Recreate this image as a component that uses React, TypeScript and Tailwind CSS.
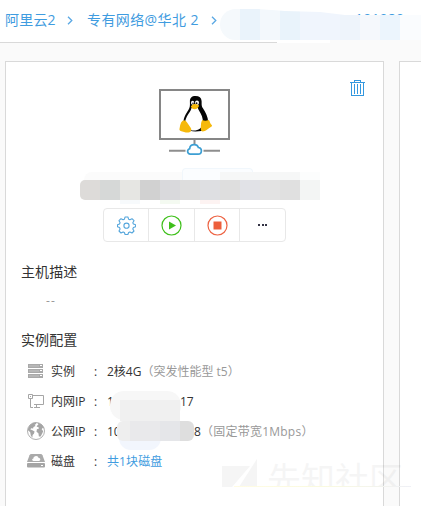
import type { ReactNode } from "react";

const nameBlocks = [
  "bg-[#dddbd9] rounded-l-[5px]",
  "bg-[#d6d8d7]",
  "bg-[#e6e6e3]",
  "bg-[#d1d1d1]",
  "bg-[#d9d9dc]",
  "bg-[#dddddd]",
  "bg-[#dedfe2]",
  "bg-[#dedede]",
  "bg-[#e1e2e7]",
  "bg-[#e3e3e3]",
  "bg-[#e0e0e0]",
  "bg-[#f3f5f4]",
];

function Chevron({ className }: { className: string }) {
  return (
    <svg className={`h-[9px] w-[6px] shrink-0 ${className}`} viewBox="0 0 6 9" fill="none" stroke="#5aa8e4" strokeWidth="1.3">
      <path d="M1 .7 4.8 4.5 1 8.3" />
    </svg>
  );
}

function HostPicture() {
  return (
    <svg className="h-[68px] w-[72px]" viewBox="0 0 72 68" fill="none">
      <rect x="1" y="2" width="69" height="49" fill="#fff" stroke="#868686" strokeWidth="2" />
      <path d="M35.500 52v4M10 62.700h16.500M44.500 62.700h16.500" stroke="#8e8e8e" strokeWidth="2" />
      <path d="M31.300 66.200a2.800 2.800 0 0 1-.6-5.500c.1-2.600 2-4 4.500-4 2.100 0 3.600 1 4.200 2.800 1.900.1 3 1.500 3 3.300 0 2-1.400 3.400-3.300 3.400z" fill="#fff" stroke="#3d9fd3" strokeWidth="1.700" />
      <path d="M36.500 8c-3.800 0-5.700 2-5.600 5.800.1 3.500.2 5.600-1.500 8.300-2.200 3.500-4.700 6.900-4.900 12.200-.3 5 3.600 9.200 12.100 9.200 8.600 0 12.800-2.700 12.600-9.500-.2-5.200-2.600-9.900-5.100-13.600-1.900-2.700-1.300-4-1.500-7.500C42.400 9.800 40.300 8 36.500 8z" fill="#050505" />
      <path d="M32.500 20c-.4 3-2.800 4.900-4.500 8.300-1.700 3.300-2.400 6.100-1.700 9.100 1.500 4 6.200 5.700 10.200 5 4.600-.8 7.200-3.200 7.400-7.800.2-4.700-1.500-8.300-3.500-11.400-.8-1.100-1.300-2.100-1.500-3.200z" fill="#fff" />
      <ellipse cx="33.600" cy="14.800" rx="1.600" ry="2" fill="#fff" />
      <ellipse cx="38" cy="14.700" rx="2" ry="2.200" fill="#fff" />
      <circle cx="34" cy="15.200" r=".8" fill="#111" />
      <circle cx="37.600" cy="15.200" r=".9" fill="#111" />
      <path d="M31.900 18.200c1.400-1.600 2.700-2.200 4.100-2.200 1.600 0 2.800.8 4.100 1.500-.4 2.100-2.500 3.700-4.500 3.700-1.900 0-3.400-1.200-3.700-3z" fill="#f6b90b" />
      <path d="M23.400 33c1.700-1.400 3.300-.5 4.500 1.300l3.600 5.200c1.700 2.400.6 4.800-2 5-2.900.3-5.300-1.100-7.900-1.600-1.700-.4-1.100-2-.8-3.600.4-2.100.8-4.900 2.600-6.300zM43.300 32c2.100 1 4 .9 6.300 0 1.600.9.9 2.900 2.400 4.200 1.200.9 1.500 1.800.2 2.600-2.700 1.600-4.500 3.600-7.200 4.500-2.500.7-3.500-1-3.200-3.600.2-3 0-5.600 1.500-7.700z" fill="#f6b90b" />
    </svg>
  );
}

function TrashIcon() {
  return (
    <svg className="h-[16px] w-[15px]" viewBox="0 0 15 16" fill="none" stroke="#3498df" shapeRendering="crispEdges">
      <path d="M0 2.500h15M4.500 2V.5h6V2M1.500 3v12.500h12V3M4.500 4v10M7.500 4v10M10.500 4v10" />
    </svg>
  );
}

function GearIcon() {
  return (
    <svg className="size-[19px]" viewBox="0 0 19 19" fill="none" stroke="#55a6dc" strokeWidth="1.100">
      <path d="M8.100 1h2.800l.7 2.200 1.300.6 2.100-1.100 2 2-1.200 2.100.6 1.300 2.200.7v2l-2.200.8-.6 1.300 1.200 2.100-2 2-2.100-1.100-1.300.6-.7 2H8.100l-.7-2-1.300-.6L4 17l-2-2 1.100-2.100-.6-1.300L.5 10.800v-2l2-.7.6-1.300L2 4.700l2-2 2.100 1.100 1.300-.6z" strokeLinejoin="round" />
      <circle cx="9.500" cy="9.700" r="2.600" />
    </svg>
  );
}

function ServerIcon() {
  return (
    <svg className="h-[15px] w-[18px]" viewBox="0 0 18 15">
      <path d="M1 0h15v4H1zM1 5h15v4H1zM1 10h15v4H1z" fill="#a9a9a9" />
      <path d="M2 2h10M2 7h10M2 12h10" stroke="#c4c4c4" />
      <path d="M13 1.500h2M13 6.500h2M13 11.500h2" stroke="#fff" />
    </svg>
  );
}

function LanIcon() {
  return (
    <svg className="h-[15px] w-[18px]" viewBox="0 0 18 15" fill="none" stroke="#a5a5a5">
      <path d="M5 1.500h11.500v9H7M3.500 5v8.500H6M9.500 11v2.500M7 13.500h6" />
      <path d="M1.500.5h4v4h-4z" fill="#fff" />
      <path d="M3 2.500h1" />
    </svg>
  );
}

function GlobeIcon() {
  return (
    <svg className="size-[18px]" viewBox="0 0 18 18">
      <circle cx="9" cy="9" r="8.500" fill="#fff" stroke="#b0b0b0" />
      <path d="M1 7C2 3.500 5 .8 8.500.6l1 1.200-1.800 1 .8 1.200-2 1.100-.4 1.400-2-.3-.7 1.300 1.600.5 2.600 1.600-.7 2.100-1.300 1.300-.2 2.700-1.600-2.300-.6-3.100L1 8.300zM10.500.8c3.400.6 6 3 6.900 6l-1.600-1-1.100 1.400 1.500 2-1.100 2.600-1.500 2.600-1.700.1-.5-3.300-1.900-1.400.4-2.600 2.100-.8-.7-1.400-1.700-.3.8-1.400 1-.5z" fill="#a5a5a5" />
    </svg>
  );
}

function DiskIcon() {
  return (
    <svg className="h-[14px] w-[18px]" viewBox="0 0 18 14">
      <path d="M4.500 0h9q1.500 0 2 1.200L18 8H0l2.500-6.800Q3 0 4.500 0z" fill="#aaa" />
      <path d="M6.500 6.900c-1.800 0-1.800-2.400-.1-2.500.1-1.400 1.300-2.300 2.700-2.300s2.200.8 2.500 1.900c2.100-.1 2.300 2.700.4 2.900z" fill="#fff" />
      <rect y="9" width="18" height="4.500" rx="1" fill="#a5a5a5" />
      <path d="M14 11.500h2" stroke="#fff" />
    </svg>
  );
}

function ConfigRow({ icon, label, children }: { icon: ReactNode; label: string; children: ReactNode }) {
  return (
    <div className="flex h-[30px] items-center">
      <span className="flex w-6 shrink-0 items-center">{icon}</span>
      <span className="w-[41px] shrink-0 pt-[2px]">{label}</span>
      <span className="w-[15px] shrink-0 pt-[2px] pl-[2px]">:</span>
      <div className="relative flex items-center pt-[2px] whitespace-nowrap">{children}</div>
    </div>
  );
}

function Breadcrumbs() {
  return (
    <header className="relative h-[43px] shrink-0 bg-white">
      <nav className="flex h-[40px] items-center pl-[5px] text-sm whitespace-nowrap text-[#3f9ce0]">
        <span className="w-[62px] tracking-[0.2px]">阿里云2</span>
        <Chevron className="mr-[14px]" />
        <span className="w-[124px] tracking-[0.4px]">专有网络@华北 2</span>
        <Chevron className="" />
      </nav>
      <div className="absolute bottom-0 left-0 h-px w-[277px] bg-[#d9d9d9]" />
      <span className="absolute top-[9px] left-[355px] text-sm leading-5 tracking-[0.200px] text-[#3f9ce0]">101980</span>
      <div className="absolute top-[15px] left-[330px] h-[31px] w-[91px] bg-[#fafafa]" />
      <div className="absolute top-[9px] left-[220px] flex h-[31px] w-[201px] overflow-hidden rounded-l-[16px] [clip-path:polygon(0_0,38px_0,65px_2px,100px_3px,125px_6px,201px_6px,201px_100%,0_100%)]">
        <i className="w-[20px] bg-[#f5f9fc]" />
        <i className="w-[20px] bg-[#eaf3fb]" />
        <i className="w-[20px] bg-[#f3f8fc]" />
        <i className="w-[20px] bg-[#e9f3fb]" />
        <i className="w-[40px] bg-[#f0f5fd]" />
        <i className="w-[20px] bg-[#eef4fb]" />
        <i className="w-[20px] bg-[#f5f8fc]" />
        <i className="w-[20px] bg-[#ecf5fd]" />
        <i className="w-[21px] bg-[#fafcfe]" />
      </div>
    </header>
  );
}

function Watermark() {
  return (
    <>
      <div className="absolute top-[459px] left-[222px] flex h-[38px] w-[190px] opacity-[0.035]">
        <svg className="h-[28px] w-[35px] shrink-0" viewBox="0 0 35 28">
          <path d="M0 7h28L10 28H0zM35 0v28H17z" fill="#000" />
        </svg>
        <div className="mt-[3px] ml-[10px] text-[34px] leading-[34px] font-normal whitespace-nowrap text-black">先知社区</div>
      </div>
      <div className="absolute top-[487px] left-[222px] flex h-[16px] w-[190px]">
        <i className="w-[161px] bg-white" />
        <i className="w-px bg-[#d9d9d9]" />
        <i className="w-[15px] bg-[#fafafa]" />
        <i className="w-px bg-[#d9d9d9]" />
        <i className="flex-1 bg-white" />
      </div>
    </>
  );
}

export default function App() {
  return (
    <div className="relative flex h-[506px] w-[421px] flex-col overflow-hidden bg-[#fafafa] font-['Open_Sans','Noto_Sans_CJK_SC',sans-serif] text-xs text-[#333]">
      <Breadcrumbs />
      <main className="flex flex-1 gap-[15px] pt-[18px] pl-[5px]">
        <section className="relative flex w-[379px] shrink-0 flex-col border border-b-0 border-[#d9d9d9] bg-white">
          <button aria-label="删除" className="absolute top-[18px] right-[18px]"><TrashIcon /></button>
          <div className="mt-[26px] ml-[153px] h-[68px]"><HostPicture /></div>
          <div className="relative mt-[24px] ml-[74px] flex h-[20px] w-[240px]">
            <i className="absolute -top-[12px] left-[102px] h-[12px] w-[71px] rounded-t border border-b-0 border-[#f1f7fc] bg-[#fbfdff]" />
            <i className="absolute -top-[8px] left-[4px] h-[8px] w-[98px] rounded-tl-lg bg-[#fbfbfb]" />
            <i className="absolute -top-[8px] left-[140px] h-[8px] w-[80px] bg-[#f6f7f7]" />
            <i className="absolute -top-[8px] left-[220px] h-[8px] w-[20px] bg-[#fcfdfd]" />
            <i className="absolute top-[20px] left-[40px] h-[4px] w-[20px] bg-[#f7fafc]" />
            <i className="absolute top-[20px] left-[80px] h-[4px] w-[20px] bg-[#f4faf1]" />
            <i className="absolute top-[20px] left-[120px] h-[4px] w-[20px] bg-[#fdf3f2]" />
            {nameBlocks.map((block, index) => <i key={index} className={`w-[20px] ${block}`} />)}
          </div>
          <div className="mt-[8px] ml-[97px] flex h-[34px] w-[183px] rounded-[4px] border border-[#e8e8e8]">
            <button aria-label="设置" className="flex w-[45px] items-center justify-center border-r border-[#e8e8e8]"><GearIcon /></button>
            <button aria-label="启动" className="flex w-[46px] items-center justify-center border-r border-[#e8e8e8]">
              <svg className="size-[21px]" viewBox="0 0 21 21"><circle cx="10.500" cy="10.500" r="9.500" fill="none" stroke="#3fc01b" strokeWidth="1.200" /><path d="m8 6.500 7 4-7 4z" fill="#3fc01b" /></svg>
            </button>
            <button aria-label="停止" className="flex w-[45px] items-center justify-center border-r border-[#e8e8e8]">
              <svg className="size-[21px]" viewBox="0 0 21 21"><circle cx="10.500" cy="10.500" r="9.500" fill="none" stroke="#ed6343" strokeWidth="1.200" /><path d="M6.500 6.500h8v8h-8z" fill="#ed5f3c" /></svg>
            </button>
            <button aria-label="更多" className="flex flex-1 items-center justify-center gap-[1.500px]">
              <i className="size-[2px] bg-[#343345]" /><i className="size-[2px] bg-[#343345]" /><i className="size-[2px] bg-[#343345]" />
            </button>
          </div>
          <h2 className="mt-[20px] ml-[15px] text-sm leading-5 tracking-[0.1px]">主机描述</h2>
          <p className="mt-[10px] ml-[40px] h-[18px] text-xs leading-[18px] tracking-[1.200px] text-[#999]">--</p>
          <h2 className="mt-[20px] ml-[15px] text-sm leading-5 tracking-[0.1px]">实例配置</h2>
          <div className="mt-[6px] ml-[21px]">
            <ConfigRow icon={<ServerIcon />} label="实例">2核4G<span className="text-[#999]">（突发性能型 t5）</span></ConfigRow>
            <ConfigRow icon={<LanIcon />} label="内网IP">
              <span className="w-[73px]">172</span><span>17</span>
              <i className="absolute -top-[1px] left-[3px] h-[29px] w-[71px] rounded-[14px] bg-[#f7f7f7]" />
              <i className="absolute top-[8px] left-[13px] h-[21px] w-[60px] bg-[#f0f0f0]" />
            </ConfigRow>
            <ConfigRow icon={<GlobeIcon />} label="公网IP">
              <span className="w-[87px]">106</span><span>8</span><span className="tracking-[0.250px] text-[#999]">（固定带宽1Mbps）</span>
              <i className="absolute top-[14px] left-[12px] h-[14px] w-[42px] rounded-b-[12px] bg-[#f2f6fd]" />
              <i className="absolute -top-[1px] left-[10px] flex h-[20px] w-[77px] overflow-hidden rounded-[6px]">
                <b className="w-[13px] bg-[#eee]" /><b className="w-[30px] bg-[#e9e9eb]" /><b className="w-[20px] bg-[#e5e6e9]" /><b className="flex-1 bg-[#dedede]" />
              </i>
            </ConfigRow>
            <ConfigRow icon={<DiskIcon />} label="磁盘"><a className="tracking-[0.1px] text-[#3f9ce0]">共1块磁盘</a></ConfigRow>
          </div>
        </section>
        <section className="flex-1 border-t border-l border-[#d9d9d9] bg-white" />
      </main>
      <Watermark />
      <div className="absolute top-[486px] left-[234px] h-px w-[177px] bg-linear-to-r from-[#fffce4] via-[#fafadf] to-[#eff0f6]" />
    </div>
  );
}
